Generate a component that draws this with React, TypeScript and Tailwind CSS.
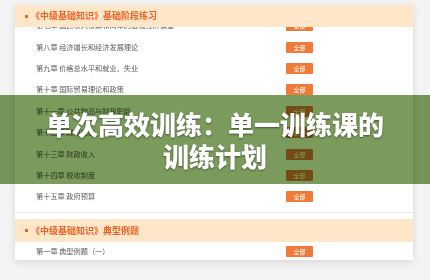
const sans = { fontFamily: '"Noto Sans CJK SC", "Noto Sans", sans-serif' };

const chapters = [
    '第七章 国民收入核算和简单的宏观经济模型',
    '第八章 经济增长和经济发展理论',
    '第九章 价格总水平和就业、失业',
    '第十章 国际贸易理论和政策',
    '第十一章 公共物品与财政职能',
    '第十二章 财政支出',
    '第十三章 财政收入',
    '第十四章 税收制度',
    '第十五章 政府预算',
    '第十六章 预算管理体制',
];

function SectionHeader({ title }: { title: string }) {
    return (
        <div className="flex-1 flex items-center gap-[3px] pl-[10px] bg-[#fde7c8] text-[#ea6429] text-[9px] font-bold">
            <span className="w-[3px] h-[3px] bg-[#ea6429]"></span>
            <span>{title}</span>
        </div>
    );
}

function Row({ label }: { label: string }) {
    return (
        <div className="flex items-center h-[21.4px] pl-[21px] pr-[100px] shrink-0">
            <span className="flex-1 text-[7.2px] text-[#5a5a5a]">{label}</span>
            <span className="w-[27px] h-[11px] flex items-center justify-center rounded-[1px] bg-[#f07a3a] text-white text-[6px]">全部</span>
        </div>
    );
}

export default function App() {
    return (
        <div className="relative w-[430px] h-[280px] overflow-hidden bg-[#f4f4f4] pt-[5px] pl-[15px]" style={sans}>
            <div className="w-[398px] bg-white shadow-[0_2px_8px_rgba(0,0,0,0.12)]">
                {/* section 1 */}
                <div className="h-[22px] flex">
                    <SectionHeader title="《中级基础知识》基础阶段练习" />
                </div>
                <div className="h-[186px] overflow-hidden border-b border-[#e6e6e6]">
                    <div className="-mt-[12px] flex flex-col">
                        {chapters.map(c => <Row key={c} label={c} />)}
                    </div>
                </div>

                {/* section 2 */}
                <div className="pt-[6px]">
                    <div className="h-[23px] flex">
                        <SectionHeader title="《中级基础知识》典型例题" />
                    </div>
                    <div className="h-[18px] flex items-center pl-[21px] pr-[100px]">
                        <span className="flex-1 text-[7.2px] text-[#5a5a5a]">第一章 典型例题（一）</span>
                        <span className="w-[27px] h-[11px] flex items-center justify-center rounded-[1px] bg-[#f07a3a] text-white text-[6px]">全部</span>
                    </div>
                </div>
            </div>

            {/* title banner */}
            <div className="absolute left-0 right-0 top-[95px] h-[89px]">
                <div className="absolute inset-0 bg-[#7b9b5c] mix-blend-multiply"></div>
                <div className="relative h-full flex flex-col items-center justify-center text-white text-[26px] leading-[32px] font-black [text-shadow:0_1px_2px_rgba(0,0,0,0.45)]">
                    <span>单次高效训练：单一训练课的</span>
                    <span>训练计划</span>
                </div>
            </div>
        </div>
    );
}
